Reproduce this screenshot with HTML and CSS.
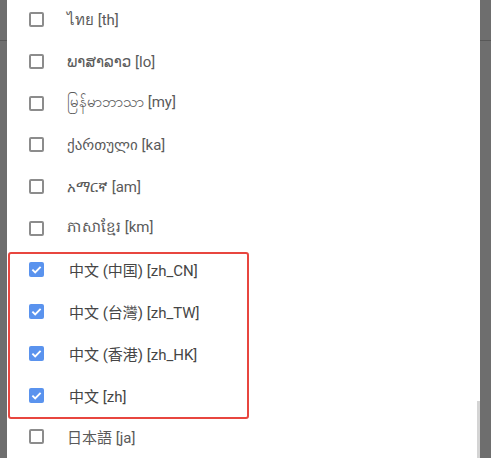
FILE: index.html
```html
<!doctype html>
<html lang="">

<head>
    <meta charset="utf-8">
    <title>languages</title>
    <meta name="viewport" content="width=device-width, initial-scale=1">
    <link rel="stylesheet" href="styles.css">
</head>

<body>
    <div class="screen">
        <div class="side side-left"><span class="rule"></span></div>
        <div class="dialog">
            <div class="list">
                <label class="row"><span class="box"></span><span class="name">ไทย [th]</span></label>
                <label class="row"><span class="box"></span><span class="name">ພາສາລາວ [lo]</span></label>
                <label class="row"><span class="box"></span><span class="name">မြန်မာဘာသာ [my]</span></label>
                <label class="row"><span class="box"></span><span class="name">ქართული [ka]</span></label>
                <label class="row"><span class="box"></span><span class="name">አማርኛ [am]</span></label>
                <label class="row"><span class="box"></span><span class="name">ភាសាខ្មែរ [km]</span></label>
                <div class="group">
                    <label class="row on"><span class="box"><svg viewBox="0 0 16 16"><path d="M3.6 8.2l3 3 5.8-6" fill="none" stroke="#fff" stroke-width="2"/></svg></span><span class="name">中文 (中国) [zh_CN]</span></label>
                    <label class="row on"><span class="box"><svg viewBox="0 0 16 16"><path d="M3.6 8.2l3 3 5.8-6" fill="none" stroke="#fff" stroke-width="2"/></svg></span><span class="name">中文 (台灣) [zh_TW]</span></label>
                    <label class="row on"><span class="box"><svg viewBox="0 0 16 16"><path d="M3.6 8.2l3 3 5.8-6" fill="none" stroke="#fff" stroke-width="2"/></svg></span><span class="name">中文 (香港) [zh_HK]</span></label>
                    <label class="row on"><span class="box"><svg viewBox="0 0 16 16"><path d="M3.6 8.2l3 3 5.8-6" fill="none" stroke="#fff" stroke-width="2"/></svg></span><span class="name">中文 [zh]</span></label>
                </div>
                <label class="row"><span class="box"></span><span class="name">日本語 [ja]</span></label>
            </div>
            <div class="thumb"></div>
        </div>
        <div class="side side-right"><span class="rule"></span></div>
    </div>
</body>

</html>
```

FILE: styles.css
```css
html,
body {
    height: 100%;
    margin: 0;
    padding: 0;
    background: #6f6f6f;
    font-family: Roboto, "Noto Sans", "Noto Sans CJK SC", "DejaVu Sans", sans-serif;
    font-size: 15px;
    overflow: hidden;
}

.screen {
    display: flex;
    height: 458px;
}

.side {
    background: #6e6e6e;
    display: flex;
    flex-direction: column;
}

.side-left {
    width: 7px;
}

.side-right {
    width: 11px;
}

.side .rule {
    display: block;
    margin-top: 40px;
    height: 1px;
    background: #585858;
}

.dialog {
    flex: 1;
    background: #fff;
    display: flex;
    justify-content: space-between;
    overflow: hidden;
}

.list {
    margin-top: -1px;
    padding-left: 22px;
}

.row {
    display: flex;
    align-items: center;
    height: 41.7px;
    color: #5a5a5a;
}

.box {
    width: 15px;
    height: 15px;
    box-sizing: border-box;
    border: 2px solid #8c8c8c;
    border-radius: 2px;
    margin-right: 23px;
    display: flex;
}

.row.on .box {
    border: none;
    background: #5a93ee;
}

.box svg {
    width: 15px;
    height: 15px;
}

.row.on .name {
    color: #454545;
    margin-left: 2px;
}

.group {
    position: relative;
}

/* annotation frame round the chinese entries */
.group::after {
    content: '';
    position: absolute;
    top: 2.5px;
    bottom: -3px;
    left: -21px;
    width: 241px;
    box-sizing: border-box;
    border: 2px solid #e8463f;
    border-radius: 3px;
    pointer-events: none;
}

.thumb {
    align-self: flex-end;
    width: 3px;
    height: 57px;
    background: #d4d4d4;
}
```
